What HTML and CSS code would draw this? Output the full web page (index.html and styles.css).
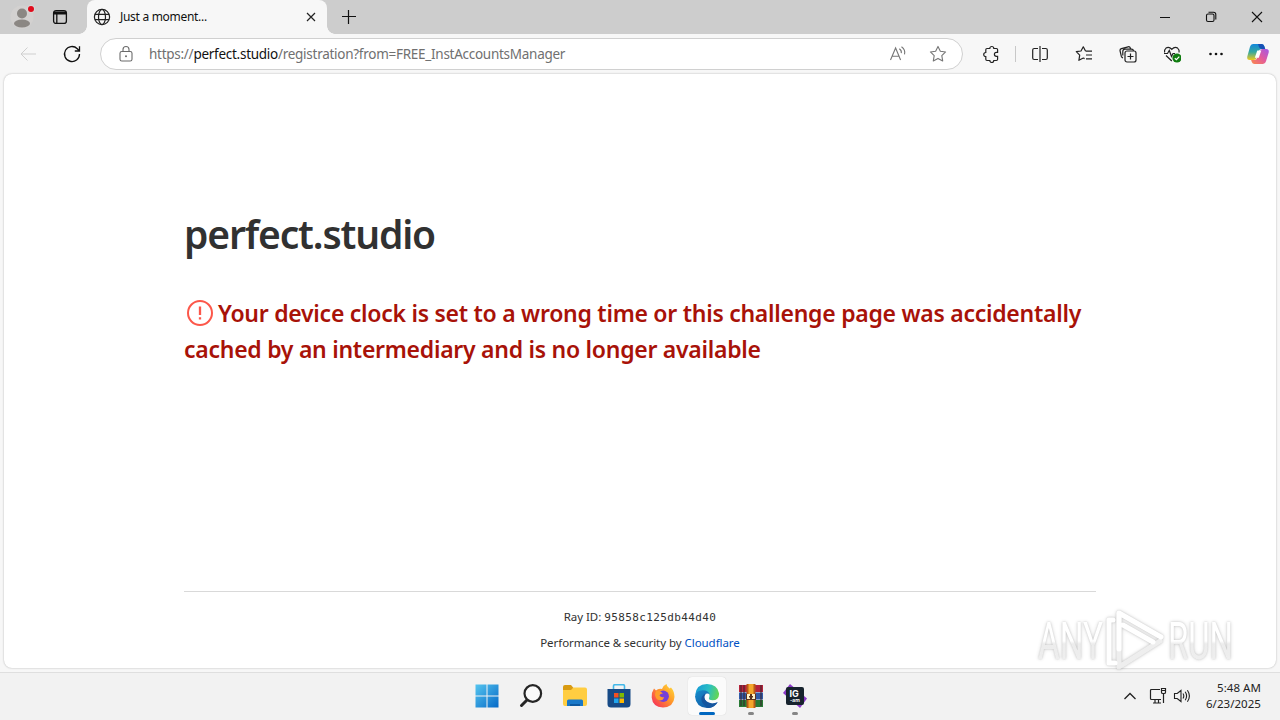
FILE: index.html
```
<!DOCTYPE html>
<html lang="en">
<head>
  <meta charset="UTF-8">
  <meta name="viewport" content="width=device-width, initial-scale=1.0">
  <title>Just a moment...</title>
  <link rel="stylesheet" href="styles.css">
</head>
<body>
  <div class="titlebar">
    <div class="profile">
      <svg width="24" height="24" viewBox="0 0 24 24">
        <circle cx="12" cy="12" r="11.5" fill="#d3d1d0"/>
        <circle cx="12" cy="8.5" r="5" fill="#8b8783"/>
        <ellipse cx="12" cy="18.500" rx="8" ry="4" fill="#8b8783"/>
        <circle cx="21" cy="4" r="4" fill="#d8d6d4"/>
        <circle cx="21" cy="4" r="3" fill="#e00b1c"/>
      </svg>
    </div>
    <div class="tab-actions">
      <svg width="16" height="16" viewBox="0 0 16 16" fill="none" stroke="#111" stroke-width="1.3">
        <rect x="1.6" y="1.6" width="12.8" height="12.8" rx="2.5"/>
        <path d="M2 3.5h12M2 4.5h12" stroke-width="2"/>
        <path d="M4.8 5v9"/>
      </svg>
    </div>
    <div class="tab">
      <svg class="globe" width="18" height="18" viewBox="0 0 18 18" fill="none" stroke="#222" stroke-width="1.2">
        <circle cx="9" cy="9" r="7.6"/>
        <ellipse cx="9" cy="9" rx="3.5" ry="7.6"/>
        <path d="M2 6.3h14M2 11.7h14"/>
      </svg>
      <span class="tab-title">Just a moment...</span>
      <svg width="10" height="10" viewBox="0 0 10 10" stroke="#222" stroke-width="1.2"><path d="M1 1l8 8M9 1L1 9"/></svg>
    </div>
    <svg class="new-tab" width="14" height="14" viewBox="0 0 14 14" stroke="#111" stroke-width="1.2"><path d="M6.500 0v14M0 6.500h14"/></svg>
    <div class="window-buttons">
      <svg width="46" height="34" viewBox="0 0 46 34" stroke="#111"><path d="M18 17.5h10"/></svg>
      <svg width="46" height="34" viewBox="0 0 46 34" fill="none" stroke="#111" stroke-width="1.1">
        <rect x="18.5" y="14" width="7.5" height="7.5" rx="1.5"/>
        <path d="M20.5 12.3h5q2.3 0 2.3 2.3v5"/>
      </svg>
      <svg width="46" height="34" viewBox="0 0 46 34" stroke="#111" stroke-width="1.1"><path d="M18 12l10 10M28 12L18 22"/></svg>
    </div>
  </div>

  <div class="toolbar">
    <svg class="nav-icon" viewBox="0 0 20 20" stroke="#cfcfcf"><path d="M18 10H3M9.5 3.5L3 10l6.5 6.5"/></svg>
    <svg class="nav-icon" viewBox="0 0 20 20" stroke="#111" stroke-width="1.3"><path d="M17.5 10a7.5 7.5 0 1 1-2.2-5.3L17.5 7M17.5 2.3V7h-4.7"/></svg>
    <div class="address">
      <svg class="lock" width="16" height="18" viewBox="0 0 16 18" fill="none" stroke="#6b6b6b" stroke-width="1.1">
        <rect x="2" y="6.5" width="12" height="9.5" rx="1.8"/>
        <path d="M5 6.5V4.500a3 3 0 0 1 6 0v2"/>
        <circle cx="8" cy="11.3" r="1" fill="#6b6b6b" stroke="none"/>
      </svg>
      <span class="url">https://<b>perfect.studio</b>/registration?from=FREE_InstAccountsManager</span>
      <svg class="read" width="18" height="18" viewBox="0 0 18 18" fill="none" stroke="#767676" stroke-width="1.1">
        <path d="M1.5 15L6.6 3l5 12M3.3 11.300h6.600M10.3 3.700q2.500 1.500 2 4.500M12.500 1.800q4.200 3 3 7.500"/>
      </svg>
      <svg width="18" height="18" viewBox="0 0 18 18" fill="none" stroke="#767676" stroke-width="1.1" stroke-linejoin="round">
        <path d="M9 1.4l2.350 4.8 5.250.75-3.8 3.7.9 5.250L9 13.4l-4.700 2.500.9-5.250-3.800-3.700 5.250-.75z"/>
      </svg>
    </div>
    <div class="tools">
      <svg viewBox="0 0 18 18">
        <path d="M5 3.500h2.800a2 2 0 0 1 4 0h2.600q1.200 0 1.200 1.200v2.600h-1.200a2 2 0 0 0 0 4h1.200v3q0 1.200-1.200 1.200h-2.600a2 2 0 0 1-4 0H5q-1.200 0-1.200-1.200v-2.600a2.100 2.100 0 0 1 0-4.200V4.700q0-1.200 1.200-1.200z"/>
      </svg>
      <i class="divider"></i>
      <svg viewBox="0 0 18 18"><path d="M7 3.500H3.200q-1.500 0-1.500 1.500v8q0 1.500 1.500 1.500H7M9 1v16M11 3.500h3.800q1.500 0 1.500 1.500v8q0 1.500-1.500 1.500H11"/></svg>
      <svg viewBox="0 0 18 18"><path d="M10.500 6L8.300 1.800 6 6l-4.700.7 3.400 3.400-.8 5.200 4.400-2.300 1.300.6M10.500 6.200H17M11 10h6M11 13.800h6" stroke-linejoin="round"/></svg>
      <svg viewBox="0 0 18 18">
        <rect x="6" y="6" width="11" height="11" rx="2"/>
        <path d="M11.500 8.500v6M8.500 11.500h6M4 13Q2.700 12.500 2.300 11.200L1.100 6Q.7 4.200 2.400 3.700l6.700-1.900q1.700-.4 2.200 1.200l.4 1.300M3.800 10.500V6.500Q3.800 4.200 6 4.200h6.500q1.800 0 2 1.800"/>
      </svg>
      <svg viewBox="0 0 18 18">
        <path d="M1.600 7.500Q1 4.700 3 3.100q3-2 5.800 1.300 2.800-3.300 5.800-1.300 2 1.600 1.500 4.400M1 8.500h3.500L6.300 5.500l2.200 6 1.500-3h2M3 10.500l5.800 5.500"/>
        <circle cx="14" cy="13" r="4.600" fill="#107c10" stroke="none"/>
        <path d="M11.8 13.200l1.600 1.500 2.900-3" stroke="#fff"/>
      </svg>
      <svg viewBox="0 0 18 18"><g fill="#111" stroke="none"><circle cx="3.500" cy="9" r="1.300"/><circle cx="9" cy="9" r="1.300"/><circle cx="14.500" cy="9" r="1.300"/></g></svg>
    </div>
    <svg class="copilot" width="24" height="24" viewBox="0 0 24 24">
      <defs>
        <linearGradient id="coA" x1="0" y1="0" x2="0" y2="1"><stop offset="0" stop-color="#1388dc"/><stop offset=".5" stop-color="#35a8a0"/><stop offset="1" stop-color="#f0c91c"/></linearGradient>
        <linearGradient id="coB" x1="1" y1="0" x2="0" y2="1"><stop offset="0" stop-color="#a25ae8"/><stop offset=".5" stop-color="#e35b9c"/><stop offset="1" stop-color="#fb8a48"/></linearGradient>
      </defs>
      <path d="M7 2h8.500q2 0 2.700 2l1 3h-3.500q-2.200 0-3 2.300l-2 6.200Q10 18 7.500 18H3.800Q.6 18 1.300 14.500L4 4.700Q4.700 2 7 2z" fill="url(#coA)"/>
      <path d="M12 2h3.500q2 0 2.700 2l1 3h-3.500q-2 0-2.700-2z" fill="#1751b5"/>
      <path d="M17 22H8.500q-2 0-2.700-2l-.7-2h3.200q2.200 0 3-2.300l2-6.200Q14 7 16.500 7h3.700q3.200 0 2.500 3.500L20 19.300Q19.300 22 17 22z" fill="url(#coB)"/>
      <path d="M11.300 8.500h4l-2.500 7.200h-4z" fill="#fff"/>
    </svg>
  </div>

  <main class="page">
    <div class="content">
      <h1>perfect.studio</h1>
      <h2>
        <svg class="alert" width="28" height="28" viewBox="0 0 28 28" fill="none" stroke="#fc574a" stroke-width="2">
          <circle cx="14" cy="14" r="12"/>
          <path d="M14 7.500v8.500M14 18.300v2.300" stroke-width="2.300"/>
        </svg><span>Your device clock is set to a wrong time or this challenge page was accidentally</span><br>
        <span>cached by an intermediary and is no longer available</span>
      </h2>
    </div>
    <footer>
      <div class="ray">Ray ID: <code>95858c125db44d40</code></div>
      <div class="security">Performance &amp; security by <a>Cloudflare</a></div>
    </footer>
  </main>

  <div class="taskbar">
    <div class="apps">
      <div class="app">
        <svg viewBox="0 0 24 24">
          <defs><linearGradient id="win" x1="0" y1="0" x2="1" y2="1"><stop offset="0" stop-color="#55c5ef"/><stop offset="1" stop-color="#0669c7"/></linearGradient></defs>
          <path d="M.5.5h11v11H.5zM12.500.5h11v11h-11zM.5 12.500h11v11H.5zM12.500 12.500h11v11h-11z" fill="url(#win)"/>
        </svg>
      </div>
      <div class="app">
        <svg viewBox="0 0 24 24" fill="#f9f9f9" stroke="#252525" stroke-linecap="round">
          <path d="M8.500 15.500L2.500 21.500" stroke-width="3"/><circle cx="13.800" cy="9.500" r="8.300" stroke-width="2.200"/>
        </svg>
      </div>
      <div class="app">
        <svg viewBox="0 0 24 24">
          <path d="M0 3q0-2 2-2h6l2.500 3L8 7H0z" fill="#d99b12"/>
          <path d="M0 6h8l2.500-2.500H22q2 0 2 2V20q0 2-2 2H2q-2 0-2-2z" fill="#ffcd41"/>
          <path d="M4 22v-5q0-1.500 1.500-1.500h13q1.500 0 1.500 1.500v5z" fill="#1978c8"/><path d="M7 20h10v2H7z" fill="#0d59a0"/>
        </svg>
      </div>
      <div class="app">
        <svg viewBox="0 0 24 24">
          <path d="M6.500 6V2q0-1.300 1.300-1.300h8.400q1.300 0 1.300 1.300v4" fill="none" stroke="#43b8e8" stroke-width="1.600"/>
          <path d="M.5 5h23v15q0 3.500-3.500 3.500H4Q.5 23.500.5 20z" fill="#174a86"/>
          <path d="M7 9h4.500v4.500H7z" fill="#f25022"/><path d="M12.500 9H17v4.500h-4.500z" fill="#7fba00"/><path d="M7 14.500h4.500V19H7z" fill="#20a5ed"/><path d="M12.500 14.500H17V19h-4.500z" fill="#ffb900"/>
        </svg>
      </div>
      <div class="app">
        <svg viewBox="0 0 24 24">
          <defs><linearGradient id="fox" x1="1" y1="0" x2="0" y2="1"><stop offset="0" stop-color="#ffe43c"/><stop offset=".45" stop-color="#ff9629"/><stop offset="1" stop-color="#f51f63"/></linearGradient></defs>
          <path d="M3 4.500l2 2Q7.500 4 11 5q1-3.500 4.500-5 0 2.500 3 4.500l1.500-1q3.500 4 3.500 9.500-.7 10-11.500 10.500Q1.500 23 .7 13.500.5 8 3 4.500z" fill="url(#fox)"/>
          <circle cx="12.200" cy="12.300" r="5.700" fill="#7540d8"/>
          <path d="M5 7q4-1 7 2.500-3 .2-3.500 2 1.500 2.500 4.500 1.500-.5 3.500-4.500 3.500Q4 15 4 10z" fill="#ff9c2a"/>
        </svg>
      </div>
      <div class="app active">
        <svg viewBox="0 0 24 24">
          <defs>
            <linearGradient id="edgeTop" x1="0" y1=".3" x2="1" y2=".5"><stop offset="0" stop-color="#189bd7"/><stop offset=".55" stop-color="#29bfc4"/><stop offset="1" stop-color="#65d653"/></linearGradient>
            <linearGradient id="edgeLow" x1="0" y1="0" x2="1" y2="1"><stop offset="0" stop-color="#168dcc"/><stop offset="1" stop-color="#124c9b"/></linearGradient>
          </defs>
          <path d="M.2 11Q1 .2 12 0q10.500.2 12 9.300.3 6.700-6.500 6.900-4.500 0-3.300-2.700Q15.500 9 11 8.300 4 7.500.2 11z" fill="url(#edgeTop)"/>
          <path d="M0 12.500Q1 6 8 6.200q5.500.2 6.800 4.300-1.500-1.800-4-.7-3 2.500-.6 6.500 3.800 5.500 11.800 2.400Q18.500 24 12 24 1 23.500 0 12.500z" fill="url(#edgeLow)"/>
          <path d="M8.700 10.500Q4 15 8.500 20q1.800 2.500 4.800 3.900Q20 23.600 22.800 18q-6 3-11-.4-4.200-3.500-1-8z" fill="#15569f"/>
        </svg>
      </div>
      <div class="app running">
        <svg viewBox="0 0 24 24">
          <path d="M0 1h24v7H0z" fill="#b5233b"/><path d="M0 8.500h24v7H0z" fill="#315ba7"/><path d="M0 16h24v7H0z" fill="#287a35"/>
          <path d="M2 1v21M5 1v21M22 1v21" stroke="#3b202d" stroke-width="1"/>
          <path d="M7.500 0h9v24h-9z" fill="#b85a18"/><path d="M9.500 0h5v24h-5z" fill="#f4a62b"/>
          <path d="M7 10h10v6H7z" fill="#5b321c"/><path d="M8 10h3v2H10v1.500h1V15H8zM13 10h3v5h-3v-1.500h1V12h-1z" fill="#fff2c8"/>
        </svg>
      </div>
      <div class="app running">
        <svg viewBox="0 0 24 24">
          <path d="M7 0l17 14.500L17 24 0 9z" fill="#8b3ac7"/>
          <rect x="3" y="3" width="18" height="18" rx="2" fill="#17232d"/>
          <text class="ig" x="6.500" y="12.500">IG</text><text class="am" x="7" y="18">-am</text>
        </svg>
      </div>
    </div>
    <div class="tray">
      <svg width="14" height="10" viewBox="0 0 14 10" fill="none" stroke="#222" stroke-width="1.3"><path d="M1.500 8L7 2.500 12.500 8"/></svg>
      <svg class="network" width="18" height="18" viewBox="0 0 18 18" fill="none" stroke="#222" stroke-width="1.200"><path d="M11 2.500H2.500q-1 0-1 1v8q0 1 1 1H12M4 16h8M6 12.500V16M9.500 12.500V16M14.500 7v9M12.500 1.500h4v3.700q0 1.300-1.300 1.300h-1.400q-1.300 0-1.300-1.300zM12.500 3.500h4"/></svg>
      <svg width="18" height="18" viewBox="0 0 18 18" fill="none" stroke="#222" stroke-width="1.100"><path d="M1.500 6.500h2.700L8 3.500v11l-3.800-3H1.500zM10 6.500q1.600 2.500 0 5M12.200 4.800q2.800 4.200 0 8.400M14.400 3.300q4 5.700 0 11.400"/></svg>
      <div class="clock"><span>5:48 AM</span><span>6/23/2025</span></div>
    </div>
  </div>

  <svg class="watermark" width="230" height="76" viewBox="0 0 230 76">
    <defs>
      <linearGradient id="fade" gradientUnits="userSpaceOnUse" x1="0" y1="10" x2="0" y2="60"><stop offset=".5" stop-color="#fff"/><stop offset=".56" stop-color="#e9e9e9"/><stop offset="1" stop-color="#eee"/></linearGradient>
    </defs>
    <g class="mark">
      <text x="4" y="53" textLength="65" lengthAdjust="spacingAndGlyphs">ANY</text>
      <text x="134" y="53" textLength="65" lengthAdjust="spacingAndGlyphs">RUN</text>
      <path d="M85 8V61L126 35" class="lower"/>
      <path d="M79 14H75V57H81"/>
      <path d="M85 43V7L127 31M89 19L119 36"/>
    </g>
  </svg>
</body>
</html>
```
FILE: styles.css
```
* {
  box-sizing: border-box;
}
body {
  margin: 0;
  height: 720px;
  overflow: hidden;
  display: flex;
  flex-direction: column;
  background: #f7f7f7;
  font-family: "Noto Sans", "Open Sans", sans-serif;
  position: relative;
}
svg {
  display: block;
  flex-shrink: 0;
}
.titlebar {
  height: 34px;
  display: flex;
  align-items: center;
  background: #cdcdcd;
}
.profile {
  width: 44px;
  padding-left: 10px;
}
.profile svg {
  overflow: visible;
}
.tab-actions {
  width: 43px;
  padding-left: 8px;
}
.tab {
  width: 240px;
  height: 34px;
  padding: 0 11px 0 6px;
  display: flex;
  align-items: center;
  background: #f7f7f7;
  border-radius: 8px 8px 0 0;
  position: relative;
}
.tab::before,
.tab::after {
  content: "";
  position: absolute;
  bottom: 0;
  width: 8px;
  height: 8px;
}
.tab::before {
  left: -8px;
  background: radial-gradient(circle at 0 0, #cdcdcd 7.5px, #f7f7f7 8px);
}
.tab::after {
  right: -8px;
  background: radial-gradient(circle at 100% 0, #cdcdcd 7.5px, #f7f7f7 8px);
}
.tab-title {
  flex: 1;
  margin-left: 9px;
  font-size: 12px;
  line-height: 16px;
  letter-spacing: -0.3px;
  color: #111;
}
.new-tab {
  margin-left: 15px;
}
.window-buttons {
  margin-left: auto;
  display: flex;
}

.toolbar {
  height: 40px;
  display: flex;
  align-items: center;
}
.nav-icon {
  width: 20px;
  height: 20px;
  margin-left: 18px;
  fill: none;
}
.nav-icon + .nav-icon {
  margin-left: 24px;
}
.address {
  width: 863px;
  height: 32px;
  margin-left: 18px;
  padding: 0 15px 0 17px;
  display: flex;
  align-items: center;
  background: #fff;
  border: 1px solid #d0d0d0;
  border-radius: 16px;
}
.url {
  flex: 1;
  margin-left: 15px;
  font-size: 13.5px;
  line-height: 20px;
  letter-spacing: -0.27px;
  color: #707070;
  white-space: nowrap;
}
.url b {
  font-weight: 400;
  color: #111;
}
.read {
  margin-right: 22px;
}
.tools {
  display: flex;
  align-items: center;
  margin-left: 19px;
  gap: 26px;
}
.tools svg {
  width: 18px;
  height: 18px;
  fill: none;
  stroke: #222;
  stroke-width: 1.2;
}
.divider {
  width: 1px;
  height: 16px;
  margin: 0 -11px;
  background: #c8c8c8;
}
.copilot {
  margin-left: 21px;
}

.page {
  height: 594px;
  margin: 0 4px 4px;
  padding: 130px 180px 0;
  display: flex;
  flex-direction: column;
  background: #fff;
  border-radius: 8px;
  box-shadow: 0 0 2px rgba(0,0,0,0.3);
}
h1 {
  margin: 0;
  font: 600 39px/60px "Noto Sans", "Open Sans", sans-serif;
  letter-spacing: -1.15px;
  color: #313131;
}
h2 {
  margin: 31px 0 0;
  font: 600 23px/36px "Noto Sans", "Open Sans", sans-serif;
  letter-spacing: -0.27px;
  color: #a81208;
  white-space: nowrap;
}
.alert {
  display: inline-block;
  margin: 0 4px 0 2px;
  vertical-align: -5px;
}
footer {
  margin-top: auto;
  height: 77px;
  padding-top: 16px;
  border-top: 1px solid #d9d9d9;
  text-align: center;
  font-size: 11.5px;
  line-height: 18px;
  letter-spacing: -0.05px;
  color: #313131;
}
.ray {
  margin-bottom: 8px;
}
footer code {
  font: 11px "DejaVu Sans Mono", monospace;
  letter-spacing: 0.38px;
}
footer a {
  color: #0051c3;
}

.taskbar {
  height: 48px;
  padding-left: 465px;
  display: flex;
  background: #f2f2f2;
  border-top: 1px solid #dfdfdf;
}
.apps {
  display: flex;
}
.app {
  width: 44px;
  height: 46px;
  display: flex;
  justify-content: center;
  align-items: center;
  position: relative;
}
.app svg {
  width: 24px;
  height: 24px;
  position: relative;
}
.active::before {
  content: "";
  position: absolute;
  left: 3px;
  top: 4px;
  width: 38px;
  height: 38px;
  background: #fbfbfb;
  border-radius: 4px;
  box-shadow: 0 0 1px rgba(0,0,0,0.2);
}
.active::after,
.running::after {
  content: "";
  position: absolute;
  bottom: 4px;
  height: 3px;
  border-radius: 2px;
}
.active::after {
  width: 16px;
  background: #0067c0;
}
.running::after {
  width: 6px;
  background: #858585;
}
.ig,
.am {
  fill: #fff;
  font: bold 9px Inter, sans-serif;
}
.am {
  font-size: 5px;
}
.tray {
  height: 46px;
  margin-left: auto;
  padding-right: 19px;
  display: flex;
  align-items: center;
}
.network {
  margin: 0 6px 0 12px;
}
.clock {
  width: 70px;
  display: flex;
  flex-direction: column;
  align-items: flex-end;
  font-size: 11.5px;
  line-height: 16px;
  letter-spacing: 0.05px;
  color: #222;
}

.watermark {
  position: absolute;
  left: 1034px;
  top: 606px;
  filter: drop-shadow(0 0 1px rgba(0,0,0,0.2)) drop-shadow(0 0 2px rgba(0,0,0,0.15));
  opacity: 0.85;
}
.mark {
  fill: url(#fade);
  font: 400 51px Roboto, sans-serif;
}
.mark path {
  fill: none;
  stroke: #fff;
  stroke-width: 5;
  stroke-linejoin: round;
  stroke-linecap: round;
}
.mark .lower {
  stroke: #ececec;
}
```
